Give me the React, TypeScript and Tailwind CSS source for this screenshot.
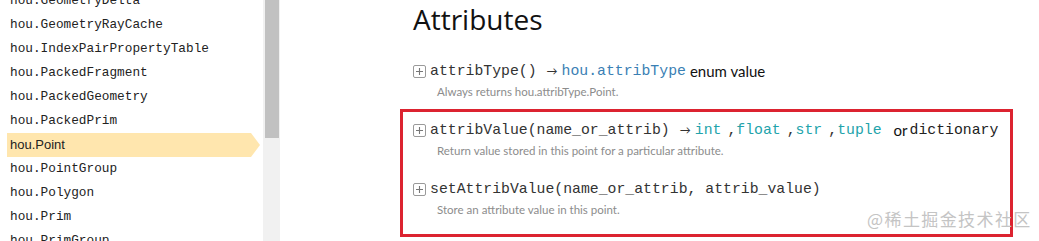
import type { ReactNode } from 'react';

const navItems = [
  'hou.GeometryDelta',
  'hou.GeometryRayCache',
  'hou.IndexPairPropertyTable',
  'hou.PackedFragment',
  'hou.PackedGeometry',
  'hou.PackedPrim',
  'hou.Point',
  'hou.PointGroup',
  'hou.Polygon',
  'hou.Prim',
  'hou.PrimGroup',
];

const mono = "font-['Liberation_Mono','DejaVu_Sans_Mono',monospace]";
const sans = "font-['Lato','Liberation_Sans',sans-serif]";

function PlusBox() {
  return (
    <svg width="13" height="13" viewBox="0 0 13 13" className="shrink-0 mr-[4px]">
      <rect x="0.5" y="0.5" width="12" height="12" rx="1.5" fill="white" stroke="#9a9a9a" />
      <path d="M6.5 3v7M3 6.5h7" stroke="#777" strokeWidth="1.1" />
    </svg>
  );
}

function Arrow() {
  return <span className={`${sans} text-[11px] text-[#333] ml-[10px] mr-[4px]`}>→</span>;
}

function Method({ sig, ret, desc }: { sig: string; ret?: ReactNode; desc: string }) {
  return (
    <div>
      <div className="flex items-center h-[22px] whitespace-pre">
        <PlusBox />
        <span className={`${mono} text-[14.8px] text-[#333]`}>{sig}</span>
        {ret}
      </div>
      <div className={`${sans} text-[11.5px] text-[#8c8c8c] h-[20px] leading-[20px] pl-[24px]`}>{desc}</div>
    </div>
  );
}

function Type({ children, color }: { children: string; color: string }) {
  return <span className={`${mono} text-[14.8px] ${color}`}>{children}</span>;
}

function Comma() {
  return <span className={`${mono} text-[14.8px] text-[#333] ml-[6px]`}>,</span>;
}

export default function App() {
  return (
    <div className="relative flex w-[1039px] h-[241px] overflow-hidden bg-white">
      {/* Sidebar */}
      <div className="w-[263px] overflow-hidden">
        <div className="mt-[-11px]">
          {navItems.map((item) =>
            item === 'hou.Point' ? (
              <div
                key={item}
                className={`ml-[7px] w-[253px] h-[24px] flex items-center pl-[3px] bg-[#ffe6ae] [clip-path:polygon(0_0,244px_0,100%_50%,244px_100%,0_100%)] ${"font-['Liberation_Sans',sans-serif]"} text-[13px] text-[#222]`}
              >
                {item}
              </div>
            ) : (
              <div key={item} className={`ml-[7px] h-[24px] flex items-center pl-[3px] ${mono} text-[12.75px] text-[#222]`}>
                {item}
              </div>
            )
          )}
        </div>
      </div>

      {/* Scrollbar */}
      <div className="w-[17px] bg-[#f1f1f1] pl-[2px] pr-[1px]">
        <div className="h-[138px] bg-[#c1c1c1]" />
      </div>

      {/* Main */}
      <div className="flex-1 pl-[120px]">
        <h2 className={`${"font-['Open_Sans','Noto_Sans',sans-serif]"} text-[28px] leading-[38px] text-[#111] pl-[13px] h-[60px]`}>
          Attributes
        </h2>
        <div className="pl-[13px] mb-[7px]">
          <Method
            sig="attribType()"
            ret={
              <>
                <Arrow />
                <Type color="text-[#3a80b4]">hou.attribType</Type>
                <span className={`${sans} text-[15px] text-[#111] ml-[4px]`}>enum value</span>
              </>
            }
            desc="Always returns hou.attribType.Point."
          />
        </div>

        <div className="w-[613px] border-[3px] border-[#dc2330] pl-[10px] pt-[7px] pb-[14px] flex flex-col gap-[17px]">
          <Method
            sig="attribValue(name_or_attrib)"
            ret={
              <>
                <Arrow />
                <Type color="text-[#22a3ab]">int</Type>
                <Comma />
                <Type color="text-[#22a3ab]">float</Type>
                <Comma />
                <Type color="text-[#22a3ab]">str</Type>
                <Comma />
                <Type color="text-[#22a3ab]">tuple</Type>
                <span className={`${sans} text-[15px] text-[#111] ml-[12px] mr-[2px]`}>or</span>
                <Type color="text-[#222]">dictionary</Type>
              </>
            }
            desc="Return value stored in this point for a particular attribute."
          />
          <Method sig="setAttribValue(name_or_attrib, attrib_value)" desc="Store an attribute value in this point." />
        </div>
      </div>

      {/* Watermark */}
      <div className="absolute left-[867px] top-[206px] text-[17px] text-[#c4c4c4] font-['Noto_Sans_CJK_SC',sans-serif] tracking-[1.4px]">
        @稀土掘金技术社区
      </div>
    </div>
  );
}
